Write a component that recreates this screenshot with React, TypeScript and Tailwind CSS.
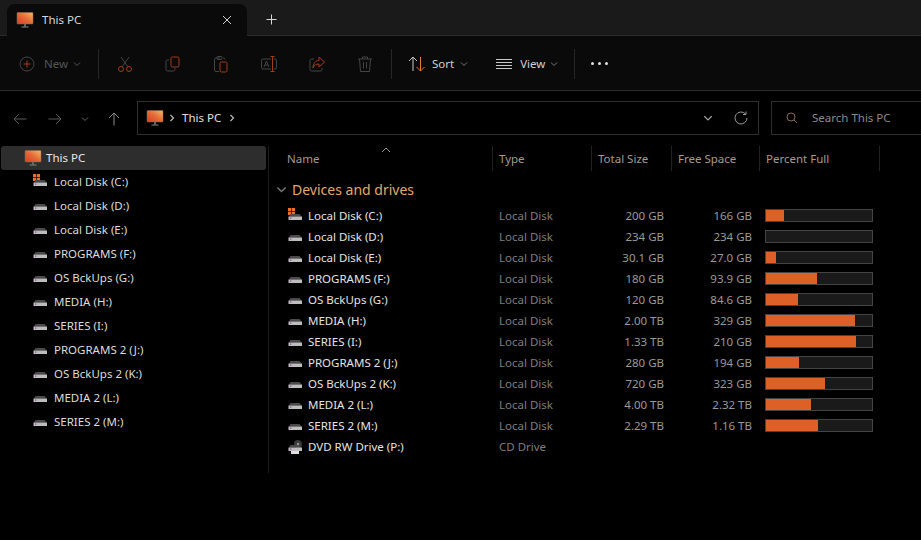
import React from "react";

const font = { fontFamily: '"Noto Sans","Open Sans",sans-serif' };

function PcIcon({ w = 18 }: { w?: number }) {
  const id = "g" + w;
  return (
    <svg width={w} height={w} viewBox="0 0 18 18" className="shrink-0">
      <defs>
        <linearGradient id={id} x1="0" y1="1" x2="1" y2="0">
          <stop offset="0" stopColor="#d63f28" />
          <stop offset="0.5" stopColor="#e56a35" />
          <stop offset="1" stopColor="#f2bb6a" />
        </linearGradient>
      </defs>
      <rect x="1" y="1.5" width="16" height="11.5" rx="0.8" fill={`url(#${id})`} stroke="#8a6a50" strokeWidth="0.5" />
      <rect x="8" y="13" width="2" height="2.5" fill="#666" />
      <rect x="5.5" y="15.5" width="7" height="1" fill="#888" />
    </svg>
  );
}

function DriveIcon({ win, dvd }: { win?: boolean; dvd?: boolean }) {
  return (
    <svg width="16" height="16" viewBox="0 0 16 16" className="shrink-0">
      {dvd && (
        <>
          <circle cx="11" cy="5" r="4" fill="#3a3a3a" />
          <circle cx="11" cy="5" r="1.2" fill="#999" />
          <rect x="4" y="11" width="8" height="4" fill="#e0e0e0" />
        </>
      )}
      {win && (
        <>
          <rect x="1" y="0" width="3.200" height="3.200" fill="#e8702a" />
          <rect x="4.800" y="0" width="3.200" height="3.200" fill="#e8702a" />
          <rect x="1" y="3.800" width="3.200" height="3.200" fill="#e8702a" />
          <rect x="4.800" y="3.800" width="3.200" height="3.200" fill="#e8702a" />
        </>
      )}
      <path d="M2 8.500 L3.500 6 H12.500 L14.500 8.500 Z" fill="#4a4a4a" />
      <rect x="1.500" y="8.500" width="13.500" height="3.500" fill="#bdbdbd" />
      <rect x="3" y="9.500" width="1.400" height="1.200" fill="#a040b0" />
    </svg>
  );
}

function Chev({ className = "", color = "#777", size = 8 }: { className?: string; color?: string; size?: number }) {
  return (
    <svg width={size} height={size} viewBox="0 0 8 8" className={className} fill="none" stroke={color} strokeWidth="1">
      <path d="M1 2.500 L4 5.500 L7 2.500" />
    </svg>
  );
}

function Right({ color = "#bbb" }: { color?: string }) {
  return (
    <svg width="8" height="8" viewBox="0 0 8 8" fill="none" stroke={color} strokeWidth="1.200" className="shrink-0">
      <path d="M2.500 1 L5.500 4 L2.500 7" />
    </svg>
  );
}

const O = "#a33c16";
const G = "#444444";

function ToolIcon({ children }: { children: React.ReactNode }) {
  return (
    <div className="w-[48px] h-[20px] flex items-center justify-center">
      <svg width="18" height="18" viewBox="0 0 18 18" fill="none" strokeWidth="1">
        {children}
      </svg>
    </div>
  );
}

function VDiv() {
  return <div className="w-px h-[30px] bg-[#262626] shrink-0" />;
}

const side = [
  "Local Disk (C:)",
  "Local Disk (D:)",
  "Local Disk (E:)",
  "PROGRAMS (F:)",
  "OS BckUps (G:)",
  "MEDIA (H:)",
  "SERIES (I:)",
  "PROGRAMS 2 (J:)",
  "OS BckUps 2 (K:)",
  "MEDIA 2 (L:)",
  "SERIES 2 (M:)",
];

const rows: [string, string, string, string, number][] = [
  ["Local Disk (C:)", "Local Disk", "200 GB", "166 GB", 18],
  ["Local Disk (D:)", "Local Disk", "234 GB", "234 GB", 0],
  ["Local Disk (E:)", "Local Disk", "30.1 GB", "27.0 GB", 10],
  ["PROGRAMS (F:)", "Local Disk", "180 GB", "93.9 GB", 51],
  ["OS BckUps (G:)", "Local Disk", "120 GB", "84.6 GB", 32],
  ["MEDIA (H:)", "Local Disk", "2.00 TB", "329 GB", 89],
  ["SERIES (I:)", "Local Disk", "1.33 TB", "210 GB", 90],
  ["PROGRAMS 2 (J:)", "Local Disk", "280 GB", "194 GB", 33],
  ["OS BckUps 2 (K:)", "Local Disk", "720 GB", "323 GB", 59],
  ["MEDIA 2 (L:)", "Local Disk", "4.00 TB", "2.32 TB", 45],
  ["SERIES 2 (M:)", "Local Disk", "2.29 TB", "1.16 TB", 52],
];

function HeadCell({ w, children }: { w: string; children: React.ReactNode }) {
  return (
    <div className={`${w} h-[25px] shrink-0 flex items-center border-r border-[#222] pl-[6px] text-[#a89a8c]`}>
      {children}
    </div>
  );
}

export default function App() {
  return (
    <div className="w-[921px] h-[540px] bg-black overflow-hidden flex flex-col text-[11.5px]" style={font}>
      {/* Tab strip */}
      <div className="h-[36px] bg-[#1a1a1a] flex items-end pl-[7px] border-b border-[#2b2b2b] shrink-0">
        <div className="w-[240px] h-[32px] -mb-px bg-[#0a0a0a] rounded-t-[8px] flex items-center pl-[9px] pr-[15px]">
          <PcIcon />
          <span className="ml-[8px] text-[#d8d8d8]">This PC</span>
          <svg width="10" height="10" viewBox="0 0 10 10" className="ml-auto" stroke="#d0d0d0" strokeWidth="1">
            <path d="M1 1 L9 9 M9 1 L1 9" />
          </svg>
        </div>
        <div className="h-[32px] flex items-center ml-[19px]">
          <svg width="11" height="11" viewBox="0 0 11 11" stroke="#d8d8d8" strokeWidth="1">
            <path d="M5.500 0.500 V10.500 M0.500 5.500 H10.500" />
          </svg>
        </div>
      </div>

      {/* Toolbar */}
      <div className="h-[55px] bg-[#0a0a0a] border-b border-[#2b2b2b] flex items-center pt-[1px] shrink-0">
        <div className="w-[98px] flex items-center pl-[19px] shrink-0">
          <svg width="16" height="16" viewBox="0 0 16 16" fill="none" stroke={G} strokeWidth="1">
            <circle cx="8" cy="8" r="7" />
            <path d="M8 4.500 V11.500 M4.500 8 H11.500" stroke={O} />
          </svg>
          <span className="ml-[9px] text-[#555]">New</span>
          <Chev className="ml-[5px]" color="#555" />
        </div>
        <VDiv />
        <div className="flex items-center pl-[2px]">
          <ToolIcon>
            <circle cx="5" cy="14" r="2.500" stroke={O} />
            <circle cx="13" cy="14" r="2.500" stroke={O} />
            <path d="M6 12 L13 2 M12 12 L5 2" stroke={G} />
          </ToolIcon>
          <ToolIcon>
            <path d="M5 5 H3.500 A1.500 1.500 0 0 0 2 6.500 V14.500 A1.500 1.500 0 0 0 3.500 16 H9.500 A1.500 1.500 0 0 0 11 14.500 V13" stroke={G} />
            <rect x="7" y="2" width="8" height="10" rx="1.500" stroke={O} />
          </ToolIcon>
          <ToolIcon>
            <path d="M8 3 H4 A1.500 1.500 0 0 0 2.500 4.500 V15 A1.500 1.500 0 0 0 4 16.500 H7 M13 4.500 A1.500 1.500 0 0 0 11.500 3 H11" stroke={G} />
            <rect x="5" y="1.500" width="5" height="3" rx="1" stroke={G} />
            <rect x="8" y="7" width="7" height="10" rx="1.500" stroke={O} />
          </ToolIcon>
          <ToolIcon>
            <path d="M11 4 H3 A1.500 1.500 0 0 0 1.500 5.500 V12.500 A1.500 1.500 0 0 0 3 14 H11 M14 4 H15 A1.500 1.500 0 0 1 16.500 5.500 V12.500 A1.500 1.500 0 0 1 15 14 H14" stroke={G} />
            <path d="M10.500 1.500 H14.500 M12.500 1.500 V16.500 M10.500 16.500 H14.500" stroke={O} />
            <path d="M4 12 L6.500 6 L9 12 M5 10 H8" stroke={G} />
          </ToolIcon>
          <ToolIcon>
            <path d="M6 4 H3.500 A1.500 1.500 0 0 0 2 5.500 V14.500 A1.500 1.500 0 0 0 3.500 16 H12.500 A1.500 1.500 0 0 0 14 14.500 V13" stroke={G} />
            <path d="M11 2 L16.500 7 L11 12 V9 C8 9 6 10 5 13 C5 8.500 7.500 5.500 11 5.500 Z" stroke={O} />
          </ToolIcon>
          <ToolIcon>
            <path d="M2 4 H16 M6.500 4 V2 H11.500 V4 M3.500 4 L4.500 16.500 H13.500 L14.500 4 M7.500 7 V13.500 M10.500 7 V13.500" stroke={G} />
          </ToolIcon>
        </div>
        <div className="ml-[2px]">
          <VDiv />
        </div>
        <div className="flex items-center pl-[16px] shrink-0">
          <svg width="18" height="18" viewBox="0 0 18 18" fill="none" strokeWidth="1">
            <path d="M5 16 V2 M1 6 L5 2 L9 6" stroke="#c8c8c8" />
            <path d="M12.500 2 V16 M8.500 12 L12.500 16 L16.500 12" stroke="#e8782a" />
          </svg>
          <span className="ml-[6px] text-[#d0d0d0]">Sort</span>
          <Chev className="ml-[6px]" color="#777" />
        </div>
        <div className="flex items-center ml-[28px] shrink-0">
          <svg width="16" height="16" viewBox="0 0 16 16" stroke="#c8c8c8" strokeWidth="1">
            <path d="M0 3.500 H16 M0 6.500 H16 M0 9.500 H16 M0 12.500 H16" />
          </svg>
          <span className="ml-[8px] text-[#d0d0d0]">View</span>
          <Chev className="ml-[5px]" color="#777" />
        </div>
        <div className="ml-[16px]">
          <VDiv />
        </div>
        <div className="ml-[16px] flex gap-[4px]">
          <span className="w-[3px] h-[3px] rounded-full bg-[#e0e0e0]" />
          <span className="w-[3px] h-[3px] rounded-full bg-[#e0e0e0]" />
          <span className="w-[3px] h-[3px] rounded-full bg-[#e0e0e0]" />
        </div>
      </div>

      {/* Address row */}
      <div className="h-[44px] flex items-end shrink-0">
        <div className="w-[137px] h-[33px] flex items-center shrink-0 pl-[13px]">
          <svg width="14" height="14" viewBox="0 0 14 14" fill="none" stroke="#5a5a5a" strokeWidth="1">
            <path d="M13.500 7 H1 M6 2 L1 7 L6 12" />
          </svg>
          <svg width="14" height="14" viewBox="0 0 14 14" fill="none" stroke="#5a5a5a" strokeWidth="1" className="ml-[21px]">
            <path d="M0.500 7 H13 M8 2 L13 7 L8 12" />
          </svg>
          <Chev className="ml-[19px]" color="#666" />
          <svg width="14" height="14" viewBox="0 0 14 14" fill="none" stroke="#8a8a8a" strokeWidth="1" className="ml-[18px]">
            <path d="M7 13.500 V1 M2 6 L7 1 L12 6" />
          </svg>
        </div>
        <div className="w-[622px] h-[34px] border border-[#2e2e2e] flex items-center pl-[8px] pr-[10px] shrink-0">
          <PcIcon />
          <span className="ml-[4px]"><Right /></span>
          <span className="ml-[6px] text-[#e0e0e0]">This PC</span>
          <span className="ml-[7px]"><Right /></span>
          <Chev className="ml-auto" color="#aaa" size={10} />
          <svg width="14" height="14" viewBox="0 0 14 14" fill="none" stroke="#999" strokeWidth="1" className="ml-[21px]">
            <path d="M11.500 3 A6 6 0 1 0 13 7 M12 0.500 V3.500 H9" />
          </svg>
        </div>
        <div className="ml-[12px] flex-1 h-[34px] border border-r-0 border-[#2e2e2e] flex items-center pl-[14px]">
          <svg width="12" height="12" viewBox="0 0 12 12" fill="none" stroke="#8a6a55" strokeWidth="1">
            <circle cx="5" cy="5" r="4" />
            <path d="M8 8 L11 11" />
          </svg>
          <span className="ml-[14px] text-[#8a8a8a]">Search This PC</span>
        </div>
      </div>

      {/* Main */}
      <div className="flex-1 flex pt-[11px] min-h-0">
        {/* Sidebar */}
        <div className="w-[269px] h-[327px] shrink-0 border-r border-[#1c1c1c] pl-[1px] pr-[2px] flex flex-col">
          <div className="h-[24px] bg-[#2d2d2d] rounded-[3px] flex items-center pl-[23px] shrink-0">
            <PcIcon />
            <span className="ml-[4px] text-[#e8e8e8]">This PC</span>
          </div>
          {side.map((s, i) => (
            <div key={s} className="h-[24px] flex items-center pl-[31px] shrink-0">
              <DriveIcon win={i === 0} />
              <span className="ml-[6px] text-[#dcdcdc]">{s}</span>
            </div>
          ))}
        </div>

        {/* Details */}
        <div className="flex-1 flex flex-col pl-[5px] min-w-0">
          <div className="flex relative">
            <svg width="10" height="6" viewBox="0 0 10 6" fill="none" stroke="#999" strokeWidth="1" className="absolute left-[107px] top-[1px]">
              <path d="M1 5 L5 1 L9 5" />
            </svg>
            <HeadCell w="w-[219px] pl-[13px]">Name</HeadCell>
            <HeadCell w="w-[99px]">Type</HeadCell>
            <HeadCell w="w-[80px]">Total Size</HeadCell>
            <HeadCell w="w-[88px]">Free Space</HeadCell>
            <HeadCell w="w-[120px]">Percent Full</HeadCell>
          </div>
          <div className="h-[31px] flex items-center pl-[2px] mt-[3px] shrink-0">
            <Chev color="#777" size={11} />
            <span className="ml-[5px] text-[14px] text-[#e0aa6c]">Devices and drives</span>
          </div>
          {rows.map(([name, type, total, free, pct], i) => (
            <div key={name} className="h-[21px] flex items-center shrink-0">
              <div className="w-[225px] flex items-center pl-[13px] shrink-0">
                <DriveIcon win={i === 0} />
                <span className="ml-[5px] text-[#e4e4e4]">{name}</span>
              </div>
              <div className="w-[79px] text-[#7e7e7e] shrink-0">{type}</div>
              <div className="w-[86px] text-right text-[#9a9a9a] shrink-0">{total}</div>
              <div className="w-[88px] text-right text-[#9a9a9a] shrink-0">{free}</div>
              <div className="ml-[13px] w-[108px] h-[13px] bg-[#1a1a1a] border border-[#444] shrink-0 flex">
                <div className="h-full bg-[#dd6027]" style={{ width: pct }} />
              </div>
            </div>
          ))}
          <div className="h-[21px] flex items-center shrink-0">
            <div className="w-[225px] flex items-center pl-[13px] shrink-0">
              <DriveIcon dvd />
              <span className="ml-[5px] text-[#e4e4e4]">DVD RW Drive (P:)</span>
            </div>
            <div className="text-[#7e7e7e]">CD Drive</div>
          </div>
        </div>
      </div>
    </div>
  );
}
